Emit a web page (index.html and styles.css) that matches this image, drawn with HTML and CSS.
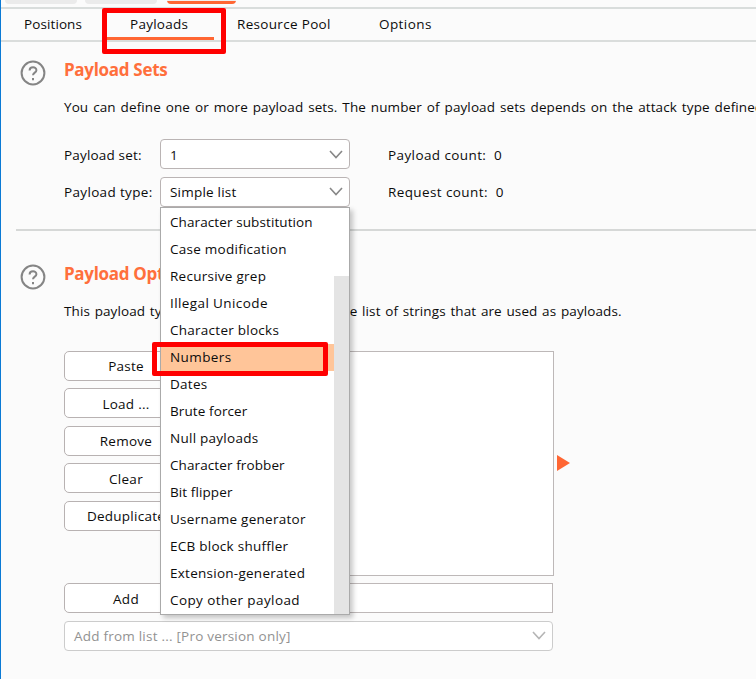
FILE: index.html
```html
<!DOCTYPE html>
<html lang="en">
<head>
<meta charset="utf-8">
<title>Intruder payloads</title>
<link rel="stylesheet" href="styles.css">
</head>
<body>
<div class="window">
  <div class="attack-tabs"><i></i><i></i><i class="current"></i></div>
  <nav class="tabs">
    <span class="tab positions"><b>Positions</b></span>
    <span class="tab payloads active"><b>Payloads</b><i class="callout callout-tab"></i></span>
    <span class="tab pool"><b>Resource Pool</b></span>
    <span class="tab options"><b>Options</b></span>
  </nav>

  <section class="sets">
    <svg class="help" viewBox="0 0 26 26"><circle cx="13" cy="13" r="11.4"/><path d="M9.6 10.4C9.7 6.2 16.4 6.3 16.4 10.2C16.4 12.6 13 12.6 13 15.2"/><path d="M13 18v2.2"/></svg>
    <div class="body">
      <h2>Payload Sets</h2>
      <p class="intro">You can define one or more payload sets. The number of payload sets depends on the attack type defined</p>
      <div class="row">
        <label class="l-set">Payload set:</label>
        <div class="select">1<svg class="chevron" viewBox="0 0 14 9"><path d="M1 1l6 6.5L13 1"/></svg></div>
        <span class="count c-payload">Payload count:&nbsp; 0</span>
      </div>
      <div class="row">
        <label class="l-type">Payload type:</label>
        <div class="select"><span class="t-simple">Simple list</span><svg class="chevron" viewBox="0 0 14 9"><path d="M1 1l6 6.5L13 1"/></svg>
          <div class="popup">
            <ul>
              <li class="snug"><span>Character substitution</span></li>
              <li><span>Case modification</span></li>
              <li><span>Recursive grep</span></li>
              <li class="loose"><span>Illegal Unicode</span></li>
              <li><span>Character blocks</span></li>
              <li class="selected loose"><span>Numbers</span><i class="callout callout-item"></i></li>
              <li><span>Dates</span></li>
              <li class="snug"><span>Brute forcer</span></li>
              <li><span>Null payloads</span></li>
              <li class="snug"><span>Character frobber</span></li>
              <li class="snug"><span>Bit flipper</span></li>
              <li><span>Username generator</span></li>
              <li><span>ECB block shuffler</span></li>
              <li><span>Extension-generated</span></li>
              <li class="loose"><span>Copy other payload</span></li>
            </ul>
            <div class="scrollbar"></div>
          </div>
        </div>
        <span class="count c-request">Request count:&nbsp; 0</span>
      </div>
    </div>
  </section>
  <hr>
  <section class="opts">
    <svg class="help" viewBox="0 0 26 26"><circle cx="13" cy="13" r="11.4"/><path d="M9.6 10.4C9.7 6.2 16.4 6.3 16.4 10.2C16.4 12.6 13 12.6 13 15.2"/><path d="M13 18v2.2"/></svg>
    <div class="body">
      <h2>Payload Opt</h2>
      <p class="desc">This payload type lets you configure a simple list of strings that are used as payloads.</p>
      <div class="editor">
        <div class="buttons">
          <button>Paste</button>
          <button>Load ...</button>
          <button>Remove</button>
          <button>Clear</button>
          <button>Deduplicate</button>
        </div>
        <div class="list"></div>
        <svg class="expand" viewBox="0 0 13 16"><path d="M0 0L13 8L0 16Z"/></svg>
      </div>
      <div class="add"><button>Add</button><div class="field"></div></div>
      <div class="select disabled"><span class="t-pro">Add from list ... [Pro version only]</span><svg class="chevron" viewBox="0 0 14 9"><path d="M1 1l6 6.5L13 1"/></svg></div>
    </div>
  </section>
</div>
</body>
</html>
```
FILE: styles.css
```css
* { box-sizing: border-box; }
body {
  margin: 0;
  background: #fbfbfb;
  color: #0c0c0c;
  font: 13.5px/18px "Open Sans", "Noto Sans", sans-serif;
  letter-spacing: .26px;
  overflow: hidden;
}
.window { height: 679px; border-left: 1px solid #0b7ad5; overflow: hidden; }
.attack-tabs { display: flex; gap: 8px; height: 7px; padding-left: 4px; }
.attack-tabs i { width: 72px; height: 4px; background: #ebebeb; border-radius: 0 0 5px 5px; }
.attack-tabs .current { margin-left: 2px; width: 69px; background: linear-gradient(#f0f0f0 1px, #ff6633 1px); }
.tabs {
  display: flex;
  height: 35px;
  border-top: 2px solid #d9dddc;
  border-bottom: 2px solid #dadddc;
}
.tab { position: relative; padding-top: 6px; white-space: nowrap; }
.tab b { font-weight: 400; }
.positions { width: 106px; padding-left: 23px; letter-spacing: .1px; }
.payloads { width: 107px; padding-left: 23px; }
.pool { width: 142px; padding-left: 23px; letter-spacing: .32px; }
.options { padding-left: 23px; letter-spacing: .42px; }
.active { box-shadow: inset 0 -3px #ff6633; height: 31px; }
.callout { position: absolute; border: 5px solid #f00; border-radius: 2px; }
.callout-tab { left: -5px; top: -1px; width: 124px; height: 46px; }
.callout-item { left: -9px; top: -2px; width: 176px; height: 34px; }

section { display: flex; }
.help { width: 26px; height: 26px; margin: 0 18.5px 0 18.5px; flex: none; fill: none; stroke: #858585; stroke-width: 2; }
.body { flex: 1; min-width: 0; }
.sets { height: 187px; padding-top: 18px; }
h2 { margin: -2px 0 0; font: 700 17px/24px "Open Sans", sans-serif; letter-spacing: -.3px; color: #ff6f3c; white-space: nowrap; }
p { margin: 16px 0 0; white-space: nowrap; letter-spacing: .1px; }
.intro { word-spacing: 1.3px; }
.desc { word-spacing: 1.08px; }
.row { display: flex; align-items: center; height: 30px; margin-top: 7.5px; }
.intro + .row { margin-top: 23px; }
.row label { width: 96px; white-space: nowrap; }
.row label, .count { padding-top: 1px; }
.l-set { letter-spacing: .18px; }
.l-type { letter-spacing: .34px; }
.count { margin-left: 38px; white-space: nowrap; letter-spacing: .4px; }
.select {
  position: relative;
  display: flex;
  align-items: center;
  justify-content: space-between;
  width: 190px;
  height: 30px;
  padding: 1px 6px 0 9px;
  background: #fff;
  border: 1px solid #bab4b4;
  border-radius: 4px;
}
.t-simple, .t-pro { letter-spacing: .22px; }
.chevron { width: 14px; height: 9px; margin-top: -1px; fill: none; stroke: #878787; stroke-width: 1.6; }
.popup {
  position: absolute;
  z-index: 5;
  left: -1px;
  top: 29px;
  display: flex;
  width: 190px;
  height: 408px;
  background: #fff;
  border: 1px solid #aaa;
  box-shadow: 3px 3px 5px rgba(0, 0, 0, .22);
}
.popup ul { flex: 1; margin: 1px 0 0; padding: 0; list-style: none; }
.popup li { position: relative; height: 27px; padding: 4px 0 0 9px; white-space: nowrap; }
.popup .snug { letter-spacing: .1px; }
.popup .loose { letter-spacing: .4px; }
.popup .selected { background: #ffc599; }
.scrollbar { width: 15px; margin-top: 68px; background: #e4e4e4; }

hr { margin: 0 0 0 15px; height: 1.5px; border: 0; background: #d6d8d7; }
.opts { padding-top: 33px; }
.editor { display: flex; align-items: center; height: 225px; margin-top: 31px; }
.buttons { display: flex; flex-direction: column; gap: 7.5px; align-self: flex-start; }
button {
  width: 124px;
  height: 30px;
  padding: 1px 0 0;
  background: #fff;
  border: 1px solid #b8b2b2;
  border-radius: 5px;
  color: inherit;
  font: inherit;
  letter-spacing: inherit;
}
.list { width: 296px; height: 225px; margin-left: 70px; background: #fff; border: 1px solid #bdb8b8; }
.expand { width: 13px; height: 16px; margin-left: 3px; fill: #ff6633; }
.add { display: flex; margin-top: 7.5px; }
.field { width: 295px; height: 30px; margin-left: 70px; background: #fff; border: 1px solid #beb8b8; }
.disabled { width: 489px; margin-top: 7.5px; border-color: #ccc; color: #929292; }
.disabled .chevron { stroke: #b5b5b5; }
```
